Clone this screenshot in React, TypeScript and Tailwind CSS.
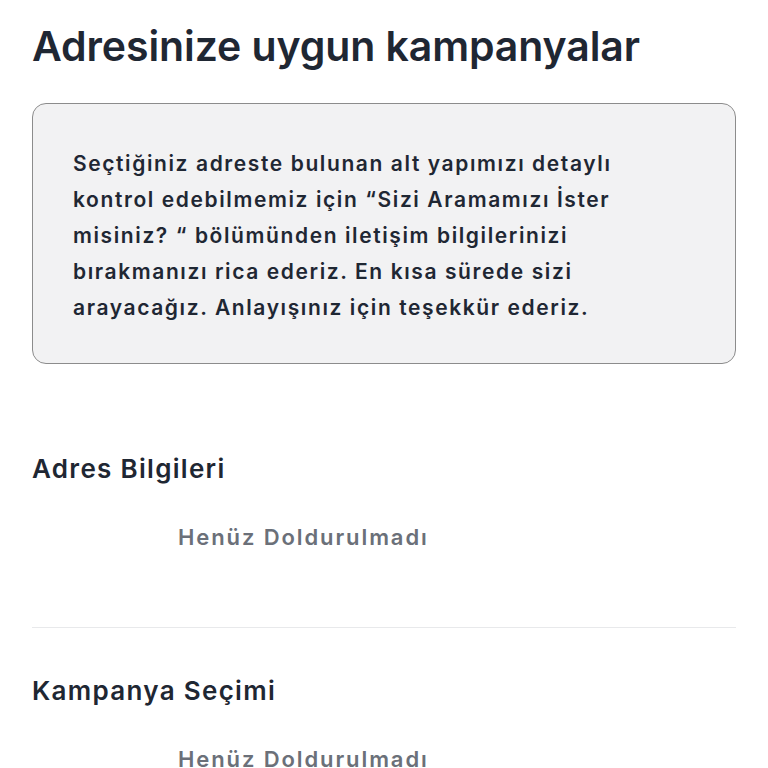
import React from "react";

const font = "font-['Inter',sans-serif]";

const lines = [
  "Seçtiğiniz adreste bulunan alt yapımızı detaylı",
  "kontrol edebilmemiz için “Sizi Aramamızı İster",
  "misiniz? “ bölümünden iletişim bilgilerinizi",
  "bırakmanızı rica ederiz. En kısa sürede sizi",
  "arayacağız. Anlayışınız için teşekkür ederiz.",
];

function Section({ title, value }: { title: string; value: string }) {
  return (
    <div className="flex flex-col">
      <h3 className={`${font} font-semibold text-[26px] leading-[36px] text-[#1f2733] tracking-[1.3px]`}>
        {title}
      </h3>
      <p className={`${font} font-semibold text-[22px] leading-[30px] text-[#6b7079] pl-[146px] mt-[35px] tracking-[1.9px]`}>
        {value}
      </p>
    </div>
  );
}

export default function App() {
  return (
    <div className="w-[768px] h-[768px] overflow-hidden bg-white px-[32px] pt-[20px]">
      <h1 className={`${font} font-semibold text-[41px] leading-[52px] text-[#1f2733] tracking-[-0.1px]`}>
        Adresinize uygun kampanyalar
      </h1>

      <div className="mt-[31px] h-[261px] rounded-[14px] border border-[#8c8c8c] bg-[#f2f2f3] pl-[40px] pr-[20px] pt-[42px]">
        <p className={`${font} font-semibold text-[21px] leading-[36px] text-[#1f2733] tracking-[1.6px]`}>
          {lines.map((l) => (
            <span key={l} className="block whitespace-nowrap">
              {l}
            </span>
          ))}
        </p>
      </div>

      <div className="mt-[87px]">
        <Section title="Adres Bilgileri" value="Henüz Doldurulmadı" />
      </div>

      <div className="mt-[75px] h-px bg-[#e8e9eb]" />

      <div className="mt-[45px]">
        <Section title="Kampanya Seçimi" value="Henüz Doldurulmadı" />
      </div>
    </div>
  );
}
